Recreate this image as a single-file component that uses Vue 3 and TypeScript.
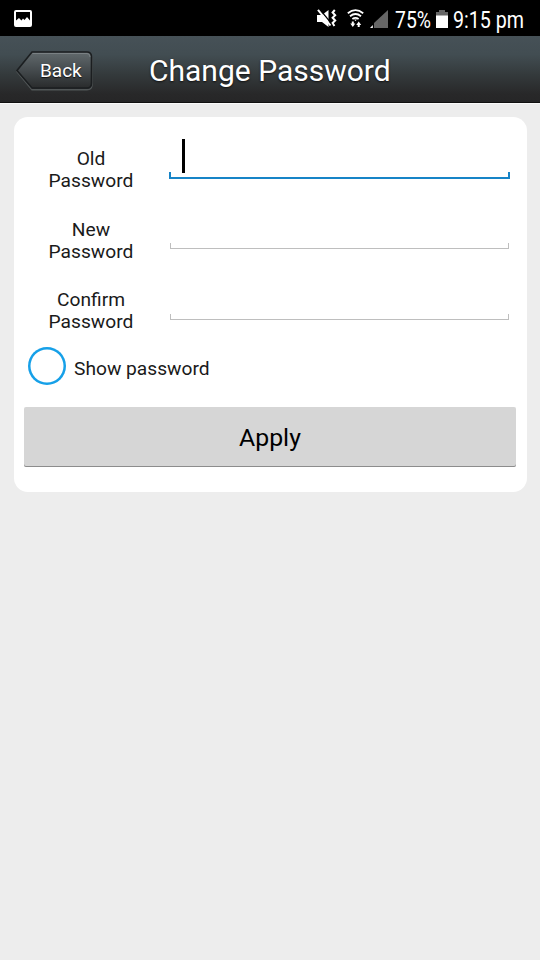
<script setup lang="ts">
import { ref } from 'vue'

interface Field {
  id: string
  label: string
  value: string
}

const fields = ref<Field[]>([
  { id: 'old', label: 'Old', value: '' },
  { id: 'new', label: 'New', value: '' },
  { id: 'confirm', label: 'Confirm', value: '' },
])
const active = ref('old')
const showPassword = ref(false)
</script>

<template>
  <div class="screen">
    <div class="status">
      <svg class="picture" width="18" height="18" viewBox="0 0 18 18">
        <path fill="#fff" fill-rule="evenodd" d="M2 0H16Q18 0 18 2V15Q18 17 16 17H2Q0 17 0 15V2Q0 0 2 0ZM2 2V10.500L5 8L7.500 10.500L9 8.500L10.500 10L13 7L16 10.500V2Z" />
      </svg>
      <svg class="mute" width="20" height="20" viewBox="0 0 20 20">
        <path fill="#fff" d="M0 6H5L11.500 1V18L5 13H0Z" />
        <path d="M3.200 1L14.500 14.500" stroke="#000" stroke-width="1.200" />
        <path d="M1 .8L13.500 16.500" stroke="#fff" stroke-width="2" />
        <path d="M17.800 1L15.600 3.500L18.200 6.200L15.600 8.800L18.200 11.500L15.600 14L17.400 17" fill="none" stroke="#fff" stroke-width="2" />
      </svg>
      <svg class="wifi" width="18" height="20" viewBox="0 0 18 20">
        <g fill="none" stroke="#fff" stroke-width="1.8">
          <path d="M.8 4.3Q8.5 -2 16.2 4.3" />
          <path d="M3 7.3Q8.5 2.8 14 7.3" />
          <path d="M5.4 10Q8.5 7.6 11.6 10" />
        </g>
        <path fill="#fff" d="M7 10.500H10L8.500 12ZM4.800 12.500H6.800V14.500H8.300L5.800 18L3.300 14.500H4.800ZM10.700 18V16H9.200L11.700 12.500L14.200 16H12.700V18Z" />
      </svg>
      <svg class="signal" width="19" height="19" viewBox="0 0 19 19">
        <path fill="#666" d="M18 0V18H4V13Z" />
        <path fill="#fff" d="M2.800 15V18H0Z" />
      </svg>
      <svg class="percent" width="41" height="36">
        <text x="0" y="28" textLength="36" lengthAdjust="spacingAndGlyphs">75%</text>
      </svg>
      <svg class="battery" width="12" height="18" viewBox="0 0 12 18">
        <path fill="#666" d="M3 0H9V2H12V6H0V2H3Z" />
        <path fill="#fff" d="M0 5.5H12V18H0Z" />
      </svg>
      <svg class="clock" width="78" height="36">
        <text x="0" y="28" textLength="71" lengthAdjust="spacingAndGlyphs">9:15 pm</text>
      </svg>
    </div>

    <header class="header">
      <button class="back" type="button">
        <svg class="back-shape" width="79" height="42" viewBox="0 0 79 42">
          <defs>
            <linearGradient id="back-fill" x1="0" y1="0" x2="0" y2="1">
              <stop offset="0" stop-color="#626a6d" />
              <stop offset=".5" stop-color="#454b4e" />
              <stop offset="1" stop-color="#292b2c" />
            </linearGradient>
          </defs>
          <path d="M17 3H72Q77 3 77 8V34Q77 39 72 39H17L2 21Z" fill="none" stroke="#515657" stroke-width="1.4" transform="translate(0 .8)" />
          <path d="M17 2H72Q76.500 2 76.500 7V33Q76.500 38 72 38H17L2 20.500Z" fill="url(#back-fill)" stroke="#1b1e20" stroke-width="1.6" />
          <path d="M17.500 3.500H72Q75 3.500 75 7" fill="none" stroke="#7a8184" stroke-width="1" />
        </svg>
        <span class="back-label">Back</span>
      </button>
      <h1 class="title">Change Password</h1>
    </header>

    <main class="card">
      <div v-for="field in fields" :key="field.id" class="row">
        <label class="label" :for="field.id">{{ field.label }}<br />Password</label>
        <div class="field" :class="{ focused: active === field.id }">
          <input
            :id="field.id"
            v-model="field.value"
            class="input"
            :type="showPassword ? 'text' : 'password'"
            @focus="active = field.id"
          />
          <span v-if="active === field.id && !field.value" class="caret"></span>
        </div>
      </div>
      <label class="show">
        <input v-model="showPassword" class="check" type="checkbox" />
        <span class="show-label">Show password</span>
      </label>
      <button class="apply" type="button">Apply</button>
    </main>
  </div>
</template>

<style>
body {
  background: #ededed;
}
</style>

<style scoped>
.screen {
  min-height: 960px;
  background: #ededed;
  font-family: Roboto, sans-serif;
  color: #1a1a1a;
}
.status {
  box-sizing: border-box;
  height: 36px;
  background: #000;
  display: flex;
  align-items: flex-start;
  padding: 0 0 0 14px;
}
.status svg {
  display: block;
  flex: none;
  overflow: visible;
}
.status text {
  font-size: 23px;
  fill: #fff;
}
.picture {
  margin-top: 10px;
}
.mute {
  margin: 9px 0 0 285px;
}
.wifi {
  margin: 9px 0 0 10px;
}
.signal {
  margin: 10px 0 0 5px;
}
.percent {
  margin: 0 0 0 6px;
}
.battery {
  margin: 10px 0 0;
}
.clock {
  margin: 0 0 0 5px;
}
.header {
  box-sizing: border-box;
  height: 67px;
  display: flex;
  align-items: flex-start;
  padding-left: 15px;
  background: linear-gradient(#465157 0, #424d52 28%, #343a3c 58%, #282829 88%, #262627 100%);
  border-bottom: 1px solid #111;
  box-shadow: 0 1px #fafafa;
}
.back {
  display: grid;
  width: 79px;
  height: 42px;
  margin-top: 14px;
  padding: 0;
  border: 0;
  background: none;
  font-family: inherit;
  font-size: 19px;
  line-height: 42px;
  color: #fff;
  text-shadow: 0 1px 1px #111;
}
.back-shape,
.back-label {
  grid-area: 1 / 1;
}
.back-label {
  text-align: left;
  padding-left: 25px;
}
.title {
  margin: 16px 0 0 55px;
  font-size: 30px;
  line-height: 38px;
  font-weight: 400;
  color: #fff;
  white-space: nowrap;
  text-shadow: 0 1px 2px #111;
}
.card {
  box-sizing: border-box;
  width: 513px;
  height: 375px;
  margin: 14px 0 0 13.5px;
  padding: 20px 10px 0 10.5px;
  border-radius: 14px;
  background: #fff;
}
.row {
  display: flex;
  height: 70.5px;
}
.label {
  width: 134px;
  padding-top: 11px;
  text-align: center;
  font-size: 19.2px;
  line-height: 22px;
}
.field {
  display: flex;
  position: relative;
  box-sizing: border-box;
  width: 339px;
  height: 42px;
  margin-left: 12px;
}
.field::after {
  content: '';
  position: absolute;
  left: 0;
  right: 0;
  bottom: 0.5px;
  height: 6px;
  box-sizing: border-box;
  border: 1px solid #bebebe;
  border-top: 0;
}
.focused::after {
  left: -1px;
  right: -1px;
  bottom: 0;
  height: 7px;
  border: 2px solid #1784c7;
  border-top: 0;
}
.input {
  flex: 1;
  min-width: 0;
  border: 0;
  padding: 0 12px;
  outline: none;
  background: none;
  font: 24px Roboto, sans-serif;
}
.caret {
  position: absolute;
  left: 12px;
  top: 2px;
  width: 3px;
  height: 34px;
  background: #000;
}
.show {
  display: flex;
  height: 38px;
  padding-left: 4px;
}
.check {
  appearance: none;
  box-sizing: border-box;
  width: 38px;
  height: 38px;
  margin: -1.5px 0 0;
  border-radius: 50%;
  box-shadow: inset 0 0 0 2.5px #16a0e8;
}
.show-label {
  margin-left: 8px;
  font-size: 19.2px;
  line-height: 39px;
}
.apply {
  display: block;
  box-sizing: border-box;
  width: 492px;
  height: 60px;
  margin: 20px 0 0;
  padding: 1px 0 0;
  border: 0;
  border-radius: 2px;
  background: #d6d6d6;
  box-shadow: inset 0 -1px #8c8c8c;
  font-family: inherit;
  font-size: 24.8px;
  color: #000;
}
</style>
